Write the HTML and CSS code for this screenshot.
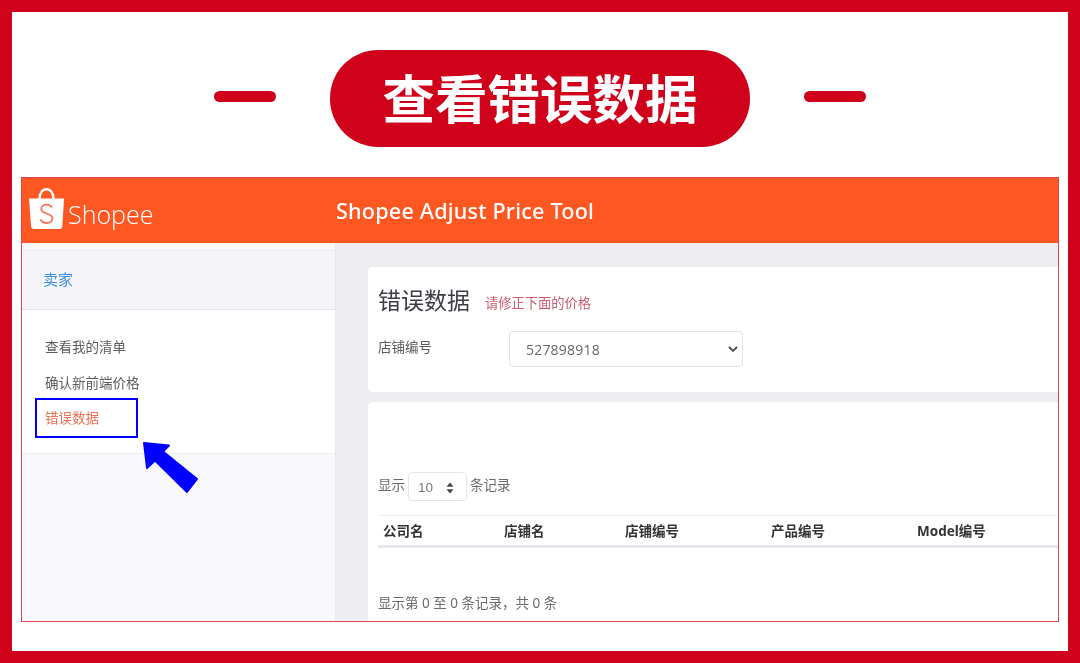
FILE: index.html
```html
<!DOCTYPE html>
<html lang="zh">
<head>
<meta charset="utf-8">
<title>查看错误数据</title>
<link rel="stylesheet" href="styles.css">
</head>
<body>
<div class="frame">
  <div class="title-row">
    <span class="dash"></span>
    <h1 class="pill">查看错误数据</h1>
    <span class="dash"></span>
  </div>
  <div class="shot">
    <header class="topbar">
      <div class="brand">
        <svg class="bag" viewBox="0 0 37 42" width="37" height="42">
          <path d="M11.5 11C11.5 5 14.5 1.2 18.5 1.2S25.500 5 25.500 11" fill="none" stroke="#fff" stroke-width="2.400"/>
          <path d="M1 10.500H36L34.300 38.500C34.200 40 33 41 31.500 41H6C4.500 41 3.300 40 3.100 38.500Z" fill="#fff"/>
          <path d="M24 19.500C22.800 17.700 20.800 16.700 18.500 16.700C15.500 16.700 13.200 18.400 13.200 21C13.200 26.500 24.500 24.500 24.500 30.500C24.500 33.200 22 35 18.800 35C16 35 13.700 33.800 12.300 31.500" fill="none" stroke="#f4785a" stroke-width="1.800"/>
        </svg>
        <span class="wordmark">Shopee</span>
      </div>
      <div class="app-name">Shopee Adjust Price Tool</div>
    </header>
    <div class="workspace">
      <aside class="sidebar">
        <div class="side-head">卖家</div>
        <nav class="menu">
          <div class="menu-item">查看我的清单</div>
          <div class="menu-item">确认新前端价格</div>
          <div class="menu-item active">错误数据</div>
        </nav>
        <div class="highlight"></div>
        <svg class="arrow" viewBox="0 0 60 55" width="60" height="55">
          <path d="M2 1L27 3.500 21 9.500 55 37 45 50 13 18.500 5 26Z" fill="#0000ff" stroke="#0000ff" stroke-width="2" stroke-linejoin="round"/>
        </svg>
      </aside>
      <main class="content">
        <section class="card filter-card">
          <div class="heading">
            <h2 class="page-title">错误数据</h2>
            <span class="page-note">请修正下面的价格</span>
          </div>
          <div class="field">
            <label class="field-label">店铺编号</label>
            <div class="select-wrap">
              <select class="shop-select"><option>527898918</option></select>
              <svg class="chevron" viewBox="0 0 10 6" width="10" height="6">
                <path d="M1 1L5 4.800 9 1" fill="none" stroke="#444" stroke-width="1.800"/>
              </svg>
            </div>
          </div>
        </section>
        <section class="card table-card">
          <div class="length-row">
            <span class="length-text">显示</span>
            <div class="mini-select">
              <span>10</span>
              <svg viewBox="0 0 8 12" width="8" height="12">
                <path d="M4 0.500L7.500 4.800H0.500ZM4 11.500L0.500 7.200H7.500Z" fill="#444"/>
              </svg>
            </div>
            <span class="length-text">条记录</span>
          </div>
          <table class="data-table">
            <thead>
              <tr>
                <th class="col-a">公司名</th>
                <th class="col-a">店铺名</th>
                <th class="col-b">店铺编号</th>
                <th class="col-b">产品编号</th>
                <th class="col-b">Model编号</th>
              </tr>
            </thead>
          </table>
          <p class="table-info">显示第 0 至 0 条记录，共 0 条</p>
        </section>
      </main>
    </div>
  </div>
</div>
</body>
</html>
```
FILE: styles.css
```css
* { box-sizing: border-box; }
html, body { margin: 0; padding: 0; }
body {
  width: 1080px;
  height: 663px;
  overflow: hidden;
  background: #fff;
  font-family: "Noto Sans", "Noto Sans CJK SC", sans-serif;
}
.frame {
  width: 1080px;
  height: 663px;
  border: 12px solid #d0021b;
  padding: 38px 9px 0;
  background: #fff;
}
.title-row {
  display: flex;
  justify-content: center;
  align-items: center;
  gap: 54px;
  height: 97px;
  margin-bottom: 30px;
}
.dash {
  width: 62px;
  height: 11px;
  margin-bottom: 5px;
  border-radius: 6px;
  background: #d0021b;
}
.pill {
  width: 420px;
  height: 97px;
  margin: 0;
  border-radius: 48px;
  background: #d0021b;
  color: #fff;
  font: 700 52.500px/93px "Noto Sans CJK SC", sans-serif;
  text-align: center;
}
.shot {
  height: 445px;
  border: 1px solid #e8424f;
  display: flex;
  flex-direction: column;
  overflow: hidden;
}
.topbar {
  flex: none;
  height: 65px;
  background: #ff5722;
  display: flex;
  align-items: center;
  color: #fff;
  filter: blur(0.35px);
}
.brand {
  width: 314px;
  display: flex;
  align-items: flex-end;
  padding: 8px 0 0 6px;
  height: 65px;
}
.bag { flex: none; margin-bottom: 13px; }
.wordmark {
  font: 300 25px/32px "Open Sans", sans-serif;
  margin: 0 0 13px 3px;
}
.app-name {
  font: 500 21.600px/30px "Noto Sans", sans-serif;
  letter-spacing: 0.200px;
}
.workspace {
  flex: 1;
  display: flex;
  min-height: 0;
  filter: blur(0.35px);
}
.sidebar {
  flex: none;
  width: 314px;
  padding-top: 7px;
  background: #f8f8fb;
  border-right: 1px solid #e9e8ed;
  position: relative;
}
.side-head {
  height: 60px;
  padding-left: 21px;
  background: #f5f4f8;
  border-top: 1px solid #ebeaef;
  border-bottom: 1px solid #e6e5ea;
  color: #3d8fe0;
  font-size: 15px;
  line-height: 57px;
}
.menu {
  background: #fff;
  padding: 20px 0 14px 23px;
  border-bottom: 1px solid #eeedf1;
  height: 144px;
}
.menu-item {
  height: 35.500px;
  line-height: 35.500px;
  font-size: 13.500px;
  color: #5c5c5c;
}
.menu-item.active { color: #ee7052; }
.highlight {
  position: absolute;
  left: 13px;
  top: 155px;
  width: 103px;
  height: 40px;
  border: 2px solid #0000ff;
}
.arrow {
  position: absolute;
  left: 120px;
  top: 199px;
}
.content {
  flex: 1;
  min-width: 0;
  background: #eeedf1;
  padding: 24px 0 0 32px;
  overflow: hidden;
}
.card {
  background: #fff;
  border-radius: 5px 0 0 5px;
  padding-left: 10px;
}
.filter-card {
  height: 125px;
  margin-bottom: 10px;
  padding-top: 17px;
}
.heading {
  display: flex;
  align-items: center;
  height: 32px;
}
.page-title {
  margin: 0;
  font-size: 23px;
  font-weight: 400;
  line-height: 32px;
  color: #3c3c44;
}
.page-note {
  margin: 5px 0 0 15px;
  font-size: 13.250px;
  color: #cb5a70;
}
.field {
  display: flex;
  align-items: flex-start;
  margin-top: 15px;
}
.field-label {
  width: 131px;
  font-size: 13.500px;
  line-height: 20px;
  margin-top: 6px;
  color: #5c5c5c;
}
.select-wrap {
  position: relative;
  width: 234px;
  height: 36px;
}
.shop-select {
  width: 234px;
  height: 36px;
  padding-left: 16px;
  border: 1px solid #e3e3e8;
  border-radius: 4px;
  background: #fff;
  color: #666;
  font: 400 14px "Open Sans", sans-serif;
  letter-spacing: 0.200px;
  appearance: none;
}
.chevron {
  position: absolute;
  right: 5px;
  top: 15px;
}
.table-card {
  height: 230px;
  padding-top: 70px;
}
.length-row {
  display: flex;
  align-items: center;
  height: 29px;
  font-size: 13.500px;
  color: #6a6a6a;
}
.length-text { margin-top: -5px; }
.mini-select {
  width: 59px;
  height: 29px;
  margin: 0 3px;
  padding: 2px 12px 0 9px;
  display: flex;
  align-items: center;
  justify-content: space-between;
  border: 1px solid #e6e6ea;
  border-radius: 4px;
  font: 400 13.500px "Liberation Sans", sans-serif;
  color: #777;
}
.data-table {
  width: 680px;
  margin-top: 14px;
  border-collapse: collapse;
  table-layout: fixed;
}
.data-table th {
  height: 31px;
  padding: 0 5px 1px;
  border-top: 1px solid #eeeef2;
  border-bottom: 3px solid #e6e6ec;
  text-align: left;
  font-size: 13.500px;
  font-weight: 700;
  color: #333;
}
.col-a { width: 121px; }
.col-b { width: 146px; }
.table-info {
  margin: 45px 0 0;
  font-size: 13.500px;
  line-height: 20px;
  color: #6a6a6a;
}
```
